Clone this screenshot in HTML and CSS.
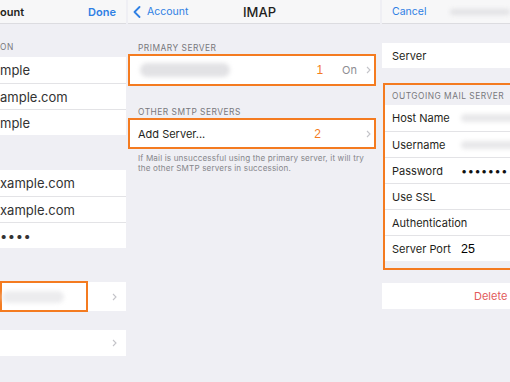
FILE: index.html
```html
<html>
<head>
<meta name="viewport" content="width=device-width, initial-scale=1">
<title>Mail account settings</title>
<link rel="stylesheet" href="styles.css">
</head>
<body>
<div class="screen">

	<section class="panel panel-account">
		<header class="nav">
			<span class="nav-cut">ount</span>
			<span class="nav-link nav-bold">Done</span>
		</header>
		<div class="label label-first">ON</div>
		<div class="group">
			<div class="row big">mple</div>
			<div class="row big">ample.com</div>
			<div class="row big">mple</div>
		</div>
		<div class="spacer-35"></div>
		<div class="group">
			<div class="row big">xample.com</div>
			<div class="row big">xample.com</div>
			<div class="row big dots">&bull;&bull;&bull;&bull;</div>
		</div>
		<div class="spacer-34"></div>
		<div class="row row-smtp">
			<div class="mark mark-field"><span class="blob blob-field"></span></div>
			<svg class="chev" width="5" height="8" viewBox="0 0 5 8"><path d="M1 1l3 3-3 3" fill="none" stroke="#c4c4c9" stroke-width="1.1"/></svg>
		</div>
		<div class="spacer-19"></div>
		<div class="row row-plain">
			<svg class="chev" width="5" height="8" viewBox="0 0 5 8"><path d="M1 1l3 3-3 3" fill="none" stroke="#c4c4c9" stroke-width="1.1"/></svg>
		</div>
	</section>

	<section class="panel panel-smtp">
		<header class="nav nav-center">
			<span class="nav-back nav-link">
				<svg width="8" height="12" viewBox="0 0 8 12"><path d="M6.5 1L1.5 6l5 5" fill="none" stroke="#2f80e4" stroke-width="1.8" stroke-linecap="round" stroke-linejoin="round"/></svg>
				Account
			</span>
			<span class="nav-title">IMAP</span>
			<span></span>
		</header>
		<div class="label label-primary">PRIMARY SERVER</div>
		<div class="mark mark-row">
			<div class="row row-server">
				<span class="blob blob-server"></span>
				<span class="num">1</span>
				<span class="detail">On</span>
				<svg class="chev" width="5" height="8" viewBox="0 0 5 8"><path d="M1 1l3 3-3 3" fill="none" stroke="#c4c4c9" stroke-width="1.1"/></svg>
			</div>
		</div>
		<div class="label label-other">OTHER SMTP SERVERS</div>
		<div class="mark mark-row">
			<div class="row row-add">
				<span class="grow">Add Server...</span>
				<span class="num">2</span>
				<svg class="chev" width="5" height="8" viewBox="0 0 5 8"><path d="M1 1l3 3-3 3" fill="none" stroke="#c4c4c9" stroke-width="1.1"/></svg>
			</div>
		</div>
		<p class="footnote">If Mail is unsuccessful using the primary server, it will try<br>the other SMTP servers in succession.</p>
	</section>

	<section class="panel panel-server">
		<div class="sheet">
			<header class="nav">
				<span class="nav-link nav-cancel">Cancel</span>
				<span class="blob blob-title"></span>
			</header>
			<div class="spacer-19"></div>
			<div class="row row-single">Server</div>
			<div class="spacer-15"></div>
			<div class="mark mark-block">
				<div class="label label-box">OUTGOING MAIL SERVER</div>
				<div class="group">
					<div class="row field"><span class="key">Host Name</span><span class="blob blob-value"></span></div>
					<div class="row field"><span class="key">Username</span><span class="blob blob-value"></span></div>
					<div class="row field"><span class="key">Password</span><span class="value dots">&bull;&bull;&bull;&bull;&bull;&bull;&bull;</span></div>
					<div class="row field"><span class="key">Use SSL</span></div>
					<div class="row field"><span class="key">Authentication</span></div>
					<div class="row field"><span class="key">Server Port</span><span class="value port">25</span></div>
				</div>
			</div>
			<div class="spacer-13"></div>
			<div class="row row-delete">Delete</div>
		</div>
	</section>

</div>
</body>
</html>
```

FILE: styles.css
```css
* {
  box-sizing: border-box;
}

body {
  margin: 0;
  font-family: Inter, "Liberation Sans", sans-serif;
  color: #1f1f21;
  background: #efeff4;
}

.screen {
  display: flex;
  gap: 2px;
  width: 510px;
  height: 382px;
  overflow: hidden;
  background: #efeff4;
}

.panel {
  flex: none;
  overflow: hidden;
}

.panel-account { width: 126px; }
.panel-smtp { width: 252px; }
.panel-server { width: 128px; }

.sheet {
  width: 260px;
}

/* nav bars */
.nav {
  height: 24px;
  display: flex;
  align-items: center;
  justify-content: space-between;
  background: #f7f7f8;
  border-bottom: 1px solid #dcdce0;
  font-size: 11px;
}

.panel-account .nav {
  padding-right: 10px;
}

.nav-cut {
  font-weight: 600;
  font-size: 11px;
}

.nav-link {
  color: #2f80e4;
}

.nav-bold {
  font-weight: 600;
}

.nav-center {
  display: grid;
  grid-template-columns: 1fr auto 1fr;
  padding-left: 5px;
}

.nav-back {
  display: flex;
  align-items: center;
  gap: 6px;
  font-size: 10.5px;
}

.nav-title {
  font-size: 13px;
  font-weight: 500;
  padding-left: 6px;
}

.nav-cancel {
  padding-left: 10px;
  font-size: 10.5px;
}

/* section labels */
.label {
  font-size: 8.4px;
  line-height: 10px;
  color: #77777c;
  letter-spacing: 0.5px;
}

.label-first { padding: 18px 0 5px; }
.label-primary { padding: 19px 0 1px 10px; }
.label-other { padding: 21px 0 1px 10px; }
.label-box {
  padding: 6px 0 4px 7px;
  background: #efeff4;
}

/* rows */
.group {
  background: #fff;
}

.row {
  display: flex;
  align-items: center;
  height: 26px;
  background: #fff;
  font-size: 11px;
}

.group .row + .row {
  border-top: 1px solid #e3e3e6;
}

.big {
  font-size: 13px;
  color: #333;
}

.dots {
  letter-spacing: 0.5px;
}

.row-smtp {
  height: 29px;
  justify-content: space-between;
  padding-right: 9px;
}

.row-plain {
  justify-content: flex-end;
  padding-right: 9px;
}

.row-single,
.field {
  padding-left: 10px;
}

.row-single {
  height: 25px;
}

.field {
  padding-left: 7px;
}

.key {
  width: 69px;
  flex: none;
}

.value {
  color: #111;
}

.port {
  font-family: "Liberation Sans", sans-serif;
  font-size: 12.5px;
  color: #000;
}

.row-delete {
  color: #e25b5b;
  padding-left: 92px;
}

/* orange highlight marks */
.mark {
  border: 2px solid #f47b20;
}

.mark-field {
  width: 88px;
  height: 31px;
  margin: -1px 0;
  display: flex;
  align-items: center;
}

.mark-row {
  width: 248px;
}

.row-server {
  height: 28px;
  padding: 0 3px 0 10px;
}

.row-add {
  height: 27px;
  padding: 0 3px 0 8px;
}

.grow {
  flex: 1;
}

.num {
  color: #f47b20;
  font-family: "Liberation Sans", sans-serif;
  font-size: 12px;
}

.row-server .num {
  margin-left: auto;
  margin-right: 19px;
}

.row-add .num {
  margin-right: 45px;
}

.detail {
  color: #8e8e93;
  margin-right: 9px;
}

.mark-block {
  width: 200px;
  margin-left: 1px;
  padding-bottom: 7px;
  background: #efeff4;
}

.footnote {
  margin: 0;
  padding: 4px 0 0 10px;
  font-size: 8.1px;
  line-height: 10px;
  color: #86868b;
  letter-spacing: 0.15px;
}

/* blurred-out values */
.blob {
  display: block;
  background: #e2e2e5;
  border-radius: 8px;
  filter: blur(2px);
}

.blob-field {
  width: 62px;
  height: 12px;
  background: #ececee;
}

.blob-server {
  width: 90px;
  height: 14px;
}

.blob-title {
  width: 60px;
  height: 6px;
  margin-right: 132px;
}

.blob-value {
  width: 60px;
  height: 8px;
  background: #e8e8ea;
}

.spacer-35 { height: 35px; }
.spacer-34 { height: 34px; }
.spacer-19 { height: 19px; }
.spacer-15 { height: 15px; }
.spacer-13 { height: 13px; }
```
